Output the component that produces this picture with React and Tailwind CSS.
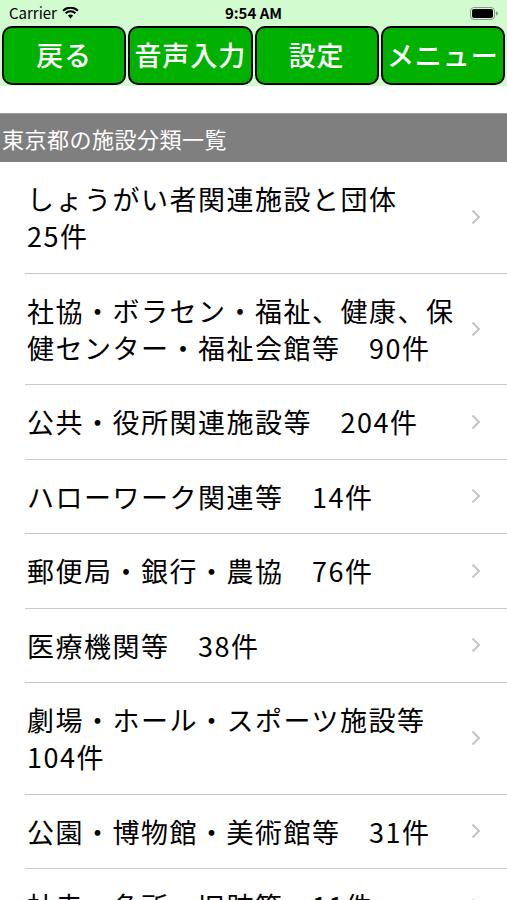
const items = [
    ['しょうがい者関連施設と団体', '25件'],
    ['社協・ボラセン・福祉、健康、保健センター・福祉会館等', '90件'],
    ['公共・役所関連施設等', '204件'],
    ['ハローワーク関連等', '14件'],
    ['郵便局・銀行・農協', '76件'],
    ['医療機関等', '38件'],
    ['劇場・ホール・スポーツ施設等', '104件'],
    ['公園・博物館・美術館等', '31件'],
    ['社寺・名所・旧跡等', '11件'],
];

const buttons = ['戻る', '音声入力', '設定', 'メニュー'];

function StatusBar() {
    return (
        <div className="h-[26px] flex items-center justify-between px-[9px] text-[15px] text-black">
            <div className="flex items-center gap-[5px]">
                <span>Carrier</span>
                <svg width="17" height="12" viewBox="0 0 17 12">
                    <path d="M8.5 11.5 L5.9 8.6 A3.8 3.8 0 0 1 11.1 8.6 Z" fill="black" />
                    <path d="M3.6 6.3 A7 7 0 0 1 13.4 6.3" stroke="black" strokeWidth="2" fill="none" />
                    <path d="M1.1 3.7 A10.5 10.5 0 0 1 15.9 3.7" stroke="black" strokeWidth="2" fill="none" />
                </svg>
            </div>
            <span className="font-semibold absolute left-1/2 -translate-x-1/2">9:54 AM</span>
            <svg width="28" height="13" viewBox="0 0 28 13">
                <rect x="0.5" y="0.5" width="24" height="12" rx="3.5" fill="none" stroke="#8a9a8a" />
                <rect x="2" y="2" width="21" height="9" rx="2" fill="black" />
                <path d="M26 4.5 A2 2 0 0 1 26 8.5 Z" fill="#8a9a8a" />
            </svg>
        </div>
    );
}

export default function App() {
    return (
        <div className="w-[507px] h-[900px] overflow-hidden bg-white" style={{ fontFamily: '"Noto Sans CJK JP", "Noto Sans", sans-serif' }}>
            <div className="bg-[#d3fbd0] relative">
                <StatusBar />
                <div className="flex gap-[2px] px-[2px] pb-[1px]">
                    {buttons.map((b) => (
                        <div
                            key={b}
                            className="flex-1 h-[59px] bg-[#00b100] border-2 border-black rounded-[10px] flex items-center justify-center text-white text-[27px] font-medium tracking-[1px] whitespace-nowrap"
                        >
                            {b}
                        </div>
                    ))}
                </div>
            </div>
            <div className="h-[27px]" />
            <div className="bg-[#7f7f7f] border-t border-[#999] h-[49px] flex items-center px-[2px] text-white text-[22px] tracking-[0.5px]">
                東京都の施設分類一覧
            </div>
            <div>
                {items.map(([t, n]) => (
                    <div key={t} className="ml-[25px] flex items-center border-b border-[#c8c7cc] pl-[2px] pr-[26px]">
                        <div className="flex-1 pt-[18px] pb-[18.5px] text-[27px] leading-[37px] tracking-[1.5px] text-black pr-[8px]">
                            {t}
                            {'　'}
                            <span className="whitespace-nowrap">{n}</span>
                        </div>
                        <svg width="10" height="16" viewBox="0 0 10 16" className="shrink-0">
                            <path d="M1.5 1.5 L8 8 L1.5 14.5" stroke="#c4c4c7" strokeWidth="2" fill="none" />
                        </svg>
                    </div>
                ))}
            </div>
        </div>
    );
}
